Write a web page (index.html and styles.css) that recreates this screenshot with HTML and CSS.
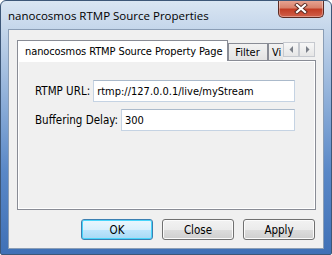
FILE: index.html
```html
<!DOCTYPE html>
<html lang="en">
<head>
    <meta charset="UTF-8">
    <title>nanocosmos RTMP Source Properties</title>
    <link rel="stylesheet" href="styles.css">
</head>
<body>
    <div class="window">
        <div class="titlebar">
            <span class="title">nanocosmos RTMP Source Properties</span>
            <button class="close-btn" type="button" aria-label="Close">
                <svg width="14" height="11" viewBox="0 0 14 11">
                    <path d="M3 2 L11 9 M11 2 L3 9" stroke="#5a2a22" stroke-width="4" stroke-linecap="square"/>
                    <path d="M3 2 L11 9 M11 2 L3 9" stroke="#ffffff" stroke-width="2.2" stroke-linecap="square"/>
                </svg>
            </button>
        </div>
        <div class="client">
            <div class="tabs">
                <div class="tab active">nanocosmos RTMP Source Property Page</div>
                <div class="tab">Filter</div>
                <div class="tab clipped">Vi</div>
                <div class="scroller">
                    <span class="arrow">
                        <svg width="5" height="7" viewBox="0 0 5 7"><polygon points="4,0 4,7 0.5,3.5" fill="#7a7f88"/></svg>
                    </span>
                    <span class="arrow">
                        <svg width="5" height="7" viewBox="0 0 5 7"><polygon points="1,0 1,7 4.5,3.5" fill="#7a7f88"/></svg>
                    </span>
                </div>
            </div>
            <div class="panel">
                <div class="form-row">
                    <label for="url">RTMP URL:</label>
                    <input type="text" id="url" value="rtmp://127.0.0.1/live/myStream">
                </div>
                <div class="form-row">
                    <label for="delay">Buffering Delay:</label>
                    <input type="text" id="delay" value="300">
                </div>
            </div>
            <div class="buttons">
                <button type="button" class="default">OK</button>
                <button type="button">Close</button>
                <button type="button">Apply</button>
            </div>
        </div>
    </div>
</body>
</html>
```

FILE: styles.css
```css
* {
    box-sizing: border-box;
}

body {
    margin: 0;
    padding: 0;
    background: #ffffff;
    font-family: "DejaVu Sans Condensed", "DejaVu Sans", sans-serif;
    font-stretch: condensed;
    font-size: 11px;
}

.window {
    width: 332px;
    height: 255px;
    border: 1px solid #3d5778;
    border-radius: 6px 6px 2px 2px;
    background: linear-gradient(to bottom, #d9e5f2 0, #c3d5ea 30px, #86a9d6 110px, #5a88c7 170px, #3f70b6 255px);
    overflow: hidden;
}

.titlebar {
    height: 28px;
    display: flex;
    justify-content: space-between;
    align-items: flex-start;
    padding-left: 7px;
    padding-right: 7px;
}

.title {
    margin-top: 7px;
    font-family: "Open Sans", sans-serif;
    font-stretch: normal;
    font-size: 11.5px;
    color: #000;
}

.close-btn {
    width: 46px;
    height: 18px;
    margin-top: -1px;
    padding: 0;
    border: 1px solid #5b2a22;
    border-top: none;
    border-radius: 0 0 5px 5px;
    background: linear-gradient(to bottom, #e8a796 0, #d8826c 45%, #c23d25 55%, #d0604a 100%);
    box-shadow: inset 0 0 0 1px rgba(255, 255, 255, 0.35);
    display: flex;
    align-items: center;
    justify-content: center;
}

.client {
    margin: 0 7px;
    height: 220px;
    border: 1px solid #8a9db5;
    background: #f0f0f0;
    padding: 10px 8px 0 8px;
}

.tabs {
    height: 20px;
    display: flex;
    align-items: flex-end;
    position: relative;
    z-index: 1;
}

.tab {
    height: 17px;
    padding: 2px 6px 0 6px;
    border: 1px solid #898c95;
    border-bottom: none;
    background: linear-gradient(to bottom, #f2f2f2, #e3e3e3);
    color: #000;
    white-space: nowrap;
}

.tab.active {
    width: 213px;
    height: 21px;
    margin-bottom: -1px;
    padding: 4px 0 0 7px;
    background: #ffffff;
    font-size: 11px;
    letter-spacing: -0.1px;
}

.tab:nth-child(2) {
    width: 40px;
}

.tab.clipped {
    width: 15px;
    padding: 2px 0 0 3px;
    overflow: hidden;
    border-right: none;
}

.scroller {
    display: flex;
    align-self: flex-start;
    margin-top: 2px;
}

.arrow {
    width: 16px;
    height: 15px;
    border: 1px solid #c6c9cf;
    background: linear-gradient(to bottom, #f7f7f7, #e6e6e6);
    display: flex;
    align-items: center;
    justify-content: center;
}

.panel {
    height: 150px;
    width: 299px;
    border: 1px solid #898c95;
    box-shadow: inset 0 0 0 1px #ffffff;
    background: #f0f0f0;
    padding: 19px 20px 0 17px;
    display: flex;
    flex-direction: column;
    gap: 7px;
}

.form-row {
    display: flex;
    align-items: center;
    gap: 3px;
}

label {
    font-size: 11.5px;
    color: #000;
    white-space: nowrap;
}

input {
    flex: 1;
    height: 22px;
    padding: 0 3px;
    border: 1px solid #c5d3e3;
    border-top-color: #abbacb;
    background: #ffffff;
    font-family: "DejaVu Sans Condensed", "DejaVu Sans", sans-serif;
    font-stretch: condensed;
    font-size: 11px;
    color: #000;
}

.buttons {
    display: flex;
    justify-content: flex-end;
    gap: 9px;
    margin-top: 9px;
}

.buttons button {
    width: 72px;
    height: 21px;
    border: 1px solid #707070;
    border-radius: 3px;
    background: linear-gradient(to bottom, #f2f2f2 0, #ebebeb 50%, #dddddd 51%, #cfcfcf 100%);
    box-shadow: inset 0 0 0 1px #fbfbfb;
    font-family: "DejaVu Sans Condensed", "DejaVu Sans", sans-serif;
    font-stretch: condensed;
    font-size: 11.5px;
    color: #000;
    padding: 0;
}

.buttons button.default {
    border-color: #3c7fb1;
    background: linear-gradient(to bottom, #eaf6fd 0, #d9f0fc 50%, #bee6fd 51%, #a7d9f5 100%);
    box-shadow: inset 0 0 0 1px #48d5fb;
}
```
